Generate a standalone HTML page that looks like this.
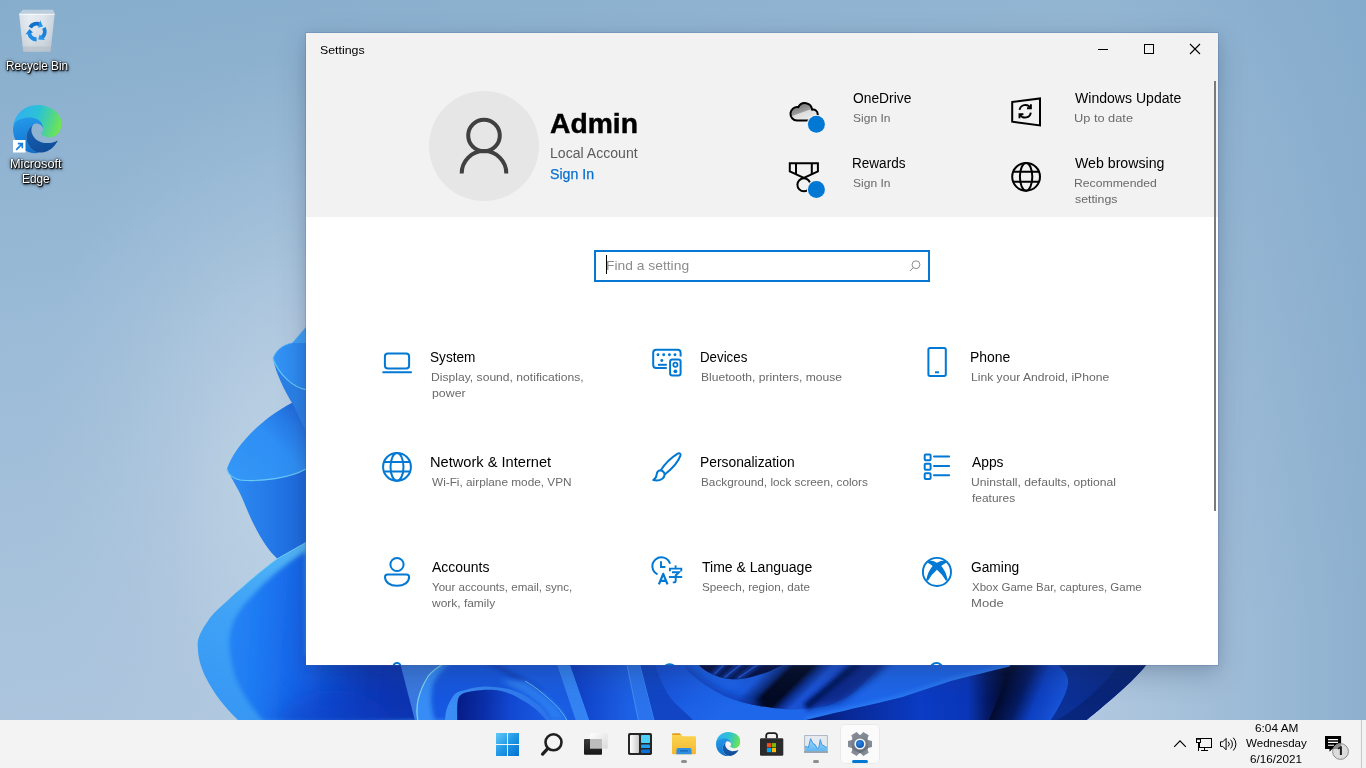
<!DOCTYPE html>
<html>
<head>
<meta charset="utf-8">
<title>Settings</title>
<style>
*{box-sizing:border-box;margin:0;padding:0}
html,body{width:1366px;height:768px;overflow:hidden}
body{font-family:"Liberation Sans",sans-serif;position:relative;background:#9bb9d4;color:#000}
svg{position:absolute;overflow:visible}
#wall{left:0;top:0;width:1366px;height:768px;overflow:hidden}
.t{position:absolute;white-space:nowrap;line-height:1;transform-origin:0 0;display:block}
.st{-webkit-text-stroke:.45px #000}
.s2{-webkit-text-stroke:.25px #0670d2}
.dl{text-shadow:1px 1px 1px rgba(0,0,0,.95),0 0 2px rgba(0,0,0,.95),0 1px 2px rgba(0,0,0,.8),0 0 4px rgba(0,0,0,.55),1px 2px 3px rgba(0,0,0,.5)}
#win{position:absolute;left:306px;top:33px;width:912px;height:632px;background:#fff;
 box-shadow:0 0 0 1px rgba(70,100,150,.22),0 10px 26px rgba(40,55,90,.26),0 2px 10px rgba(40,55,90,.10)}
#hdr{position:absolute;left:0;top:0;width:912px;height:184px;background:#f2f2f2}
#sb{position:absolute;left:1214px;top:81px;width:2px;height:430px;background:#7a7a7a}
#search{position:absolute;left:594px;top:250px;width:336px;height:32px;border:2px solid #0876d3;background:#fff}
#caret{position:absolute;left:606px;top:255px;width:1px;height:19px;background:#000}
#avatar{position:absolute;left:429px;top:91px;width:110px;height:110px;border-radius:50%;background:#e6e6e6}
#tb{position:absolute;left:0;top:720px;width:1366px;height:48px;background:#f3f3f3}
#tbhl{position:absolute;left:841px;top:725px;width:38px;height:38px;border-radius:4px;background:#fbfbfb;box-shadow:0 0 0 1px rgba(0,0,0,.04)}
.ind{position:absolute;height:3px;border-radius:2px;background:#8e8e8e}
</style>
</head>
<body>
<!--WALL-->
<svg id="wall" width="1366" height="768" viewBox="0 0 1366 768">
<defs>
<linearGradient id="bg" x1="0" y1="0" x2="0.30" y2="1">
<stop offset="0" stop-color="#86adcc"/><stop offset=".4" stop-color="#9bbbd7"/><stop offset=".75" stop-color="#a9c3dc"/><stop offset="1" stop-color="#b0c8df"/>
</linearGradient>
<radialGradient id="glowL" gradientUnits="userSpaceOnUse" cx="300" cy="470" r="330" gradientTransform="translate(300 470) scale(.8 1.25) translate(-300 -470)">
<stop offset="0" stop-color="#cbdbea" stop-opacity=".7"/><stop offset=".35" stop-color="#c4d6e7" stop-opacity=".5"/><stop offset=".7" stop-color="#b8cde1" stop-opacity=".22"/><stop offset="1" stop-color="#b0c8de" stop-opacity="0"/></radialGradient>
<linearGradient id="bgr" gradientUnits="userSpaceOnUse" x1="1100" y1="0" x2="1366" y2="0">
<stop offset="0" stop-color="#7ea6c8" stop-opacity="0"/><stop offset="1" stop-color="#7ea6c8" stop-opacity=".7"/>
</linearGradient>
<filter id="b2" x="-20%" y="-20%" width="140%" height="140%"><feGaussianBlur stdDeviation="2"/></filter>
<filter id="b3" x="-20%" y="-20%" width="140%" height="140%"><feGaussianBlur stdDeviation="3.500"/></filter>
<filter id="b6" x="-30%" y="-30%" width="160%" height="160%"><feGaussianBlur stdDeviation="6"/></filter>
<filter id="b12" x="-30%" y="-30%" width="160%" height="160%"><feGaussianBlur stdDeviation="12"/></filter>
<linearGradient id="gBin" gradientUnits="userSpaceOnUse" x1="238" y1="478" x2="310" y2="405">
<stop offset="0" stop-color="#3496f6"/><stop offset=".5" stop-color="#2e8ef4"/><stop offset=".75" stop-color="#2679e6"/><stop offset="1" stop-color="#1c5dd0"/></linearGradient>
<linearGradient id="gBout" gradientUnits="userSpaceOnUse" x1="227" y1="0" x2="306" y2="0">
<stop offset="0" stop-color="#2f8df2"/><stop offset="1" stop-color="#1c68de"/></linearGradient>
<linearGradient id="gAin" gradientUnits="userSpaceOnUse" x1="273" y1="0" x2="306" y2="0">
<stop offset="0" stop-color="#3496f5"/><stop offset="1" stop-color="#2a85ee"/></linearGradient>
<linearGradient id="gC" gradientUnits="userSpaceOnUse" x1="195" y1="640" x2="400" y2="655">
<stop offset="0" stop-color="#2a8cf6"/><stop offset=".28" stop-color="#1f7cf3"/><stop offset=".57" stop-color="#145ee6"/><stop offset=".74" stop-color="#0c44ca"/><stop offset=".86" stop-color="#0a38b8"/><stop offset="1" stop-color="#0a34b2"/></linearGradient>
<linearGradient id="gCrim" gradientUnits="userSpaceOnUse" x1="306" y1="540" x2="220" y2="720">
<stop offset="0" stop-color="#55b8f7"/><stop offset=".4" stop-color="#42a5f6"/><stop offset="1" stop-color="#3696f4"/></linearGradient>
<linearGradient id="gArch" gradientUnits="userSpaceOnUse" x1="457" y1="0" x2="546" y2="0">
<stop offset="0" stop-color="#071c86"/><stop offset=".3" stop-color="#0a2ea8"/><stop offset=".6" stop-color="#1248d2"/><stop offset="1" stop-color="#1a5ae2"/></linearGradient>
<linearGradient id="gArchB" gradientUnits="userSpaceOnUse" x1="445" y1="0" x2="551" y2="0">
<stop offset="0" stop-color="#3b8ff5"/><stop offset="1" stop-color="#2a72ea"/></linearGradient>
<linearGradient id="gMid1" gradientUnits="userSpaceOnUse" x1="575" y1="0" x2="632" y2="0">
<stop offset="0" stop-color="#0f40c6"/><stop offset="1" stop-color="#1d62e6"/></linearGradient>
<linearGradient id="gH1" gradientUnits="userSpaceOnUse" x1="660" y1="668" x2="720" y2="715">
<stop offset="0" stop-color="#164ed4"/><stop offset=".6" stop-color="#1c60e6"/><stop offset="1" stop-color="#1e66ea"/></linearGradient>
<linearGradient id="gH2" gradientUnits="userSpaceOnUse" x1="690" y1="0" x2="835" y2="0">
<stop offset="0" stop-color="#1c62e8"/><stop offset=".4" stop-color="#1856dc"/><stop offset=".62" stop-color="#08205e"/><stop offset=".75" stop-color="#030a22"/><stop offset=".9" stop-color="#0a2a7e"/><stop offset="1" stop-color="#1a55d8"/></linearGradient>
<linearGradient id="gP" gradientUnits="userSpaceOnUse" x1="740" y1="674.400" x2="810.700" y2="745.100">
<stop offset="0" stop-color="#1c62e8"/><stop offset=".15" stop-color="#1a5ae0"/><stop offset=".27" stop-color="#0b2a7a"/><stop offset=".32" stop-color="#030a24"/><stop offset=".45" stop-color="#030a24"/><stop offset=".52" stop-color="#0c2f8e"/><stop offset=".6" stop-color="#1a52d4"/><stop offset=".75" stop-color="#184ccc"/><stop offset="1" stop-color="#1446c0"/></linearGradient>
<linearGradient id="gJ" gradientUnits="userSpaceOnUse" x1="905" y1="693" x2="893" y2="646">
<stop offset="0" stop-color="#2d7cf2"/><stop offset=".25" stop-color="#1d64e6"/><stop offset=".6" stop-color="#1148c4"/><stop offset="1" stop-color="#061c6e"/></linearGradient>
<linearGradient id="gUJ" gradientUnits="userSpaceOnUse" x1="800" y1="0" x2="1040" y2="0">
<stop offset="0" stop-color="#05186a"/><stop offset=".2" stop-color="#082896"/><stop offset=".5" stop-color="#0b3cc4"/><stop offset=".7" stop-color="#0a36b8"/><stop offset=".78" stop-color="#051a66"/><stop offset=".86" stop-color="#020a2c"/><stop offset="1" stop-color="#030e40"/></linearGradient>
<linearGradient id="gK" gradientUnits="userSpaceOnUse" x1="1001" y1="690" x2="1062" y2="715.400">
<stop offset="0" stop-color="#020a2c"/><stop offset=".3" stop-color="#051a60"/><stop offset=".55" stop-color="#0d3fc0"/><stop offset="1" stop-color="#1a58dc"/></linearGradient>
<linearGradient id="gL" gradientUnits="userSpaceOnUse" x1="1060" y1="690" x2="1130" y2="650">
<stop offset="0" stop-color="#0b3096"/><stop offset=".6" stop-color="#0a2a88"/><stop offset="1" stop-color="#082474"/></linearGradient>
</defs>
<rect width="1366" height="768" fill="url(#bg)"/>
<rect width="1366" height="768" fill="url(#bgr)"/>
<rect width="700" height="768" fill="url(#glowL)"/>
<!-- window drop shadow (soft, on wallpaper) -->
<!-- bloom base -->
<path d="M306 330H1160V650L1146 665C1135 680 1105 705 1086.600 720H300V560L306 540Z" fill="#0e40c4"/>
<!-- ===== left strip ===== -->
<!-- B interior -->
<path d="M227 469C233 450 256 422 291.600 403L306 393V469C290 478 262 482 240 480C232 478 228 474 227 469Z" fill="url(#gBin)"/>
<!-- A0 sliver, A interior, A outer -->
<path d="M306 327L292.200 343H306Z" fill="#3e9ff5"/>
<path d="M273 358.700C279 375 293 387 306 389.600V432L293 404.500C284 390 276 373 273 358.700Z" fill="#2a80e8"/>
<path d="M273 358.700C275 351 283 344.500 292 343H306V389.600C293 387 279 375 273 358.700Z" fill="url(#gAin)"/>
<path d="M273 358.700C279 375 293 387 306 389.600" fill="none" stroke="#66c6f6" stroke-width="1.100"/>
<path d="M273 358.700C275 351 283 344.500 292 343" fill="none" stroke="#58b4f5" stroke-width=".800"/>
<!-- B outer -->
<path d="M227 469C228 474 232 478 240 480C262 482 290 478 306 469V542.400L277.300 558.700C265.900 548.700 254.400 528.600 243 500C238 488 231 478 227 469Z" fill="url(#gBout)"/>
<path d="M227 469C228 474 232 478 240 480C262 482 290 478 306 469" fill="none" stroke="#6acaf6" stroke-width="1.200"/>
<!-- C rim + inner -->
<path id="Cp" d="M306 542.400L277.300 558.700C262 570 248 582 237.300 591.600C222 606 212 614 208.600 620C200 632 197 640 197.700 646C198 658 201 668 205.800 677.500C213 692 225 708 238 720H420V655H306Z" fill="url(#gCrim)"/>
<clipPath id="Cc"><use href="#Cp"/></clipPath>
<g clip-path="url(#Cc)"><path d="M306 551C285 564 265 581 252.600 595.500C241 607 233 619 231 629.800C229 637 229 643 229.700 649.900C231 663 234 675 238.300 684.200C245 698 254 711 264 721H420V655H306Z" fill="url(#gC)" filter="url(#b2)"/><ellipse cx="335" cy="735" rx="60" ry="45" fill="#0b3cc0" opacity=".55" filter="url(#b12)"/></g>
<path d="M306 542.400L277.300 558.700C262 570 248 582 237.300 591.600" fill="none" stroke="#6fd0f6" stroke-width="1" opacity=".8"/>
<!-- ===== bottom strip ===== -->
<!-- D band (grayish light) -->
<path d="M399.300 660L414.800 720H420L446 720V660Z" fill="#3a7ae0"/>
<!-- D interior light band then inner -->
<path id="Dp" d="M446 660C440 666 434 669 428.300 676C417 694 415.500 708 417.800 720H570L560 660Z" fill="#378cf5"/>
<path d="M452 660C441 671 434.500 679 433.100 684C431 692 431 700 431.500 704C432 710 433 715 434.800 720H570L560 660Z" fill="#1858e0" filter="url(#b2)"/>
<path d="M446 662C440 666 434 669 428.300 676C417 694 415.500 708 417.800 720" fill="none" stroke="#7ad2f2" stroke-width="1.300"/>
<!-- E region above cyan edge -->
<path d="M489.500 660L525 681C531 684.500 536 688 541 692C547 697 552 701.500 557.200 706.700C561 711 564 715 566.800 720H580L560 660Z" fill="#1a5ce2"/>
<path d="M485 660L525 681L541 692" fill="none" stroke="#0a2c96" stroke-width="4" opacity=".55" filter="url(#b2)"/>
<!-- light band between arch and cyan edge -->
<path d="M500 680C514 688 520 691 525 694C531 698 536 702 541 706C545 710 548 715 550.700 720H566.800C564 715 561 711 557.200 706.700C552 701.500 547 697 541 692C536 688 531 684.500 525 681Z" fill="#2c7af0" filter="url(#b2)"/>
<path d="M525 681C531 684.500 536 688 541 692C547 697 552 701.500 557.200 706.700C561 711 564 715 566.800 720" fill="none" stroke="#63bdf2" stroke-width="1" opacity=".85"/>
<!-- arch band + dark interior -->
<path d="M445.200 720C445.500 712 446 708 452.500 697C456 692 460 691 463.700 690.600C470 688.500 478 687 484.700 686.600C493 686.600 501 687.500 508.800 689C514 690.500 520 693 525 695.400C531 699 536 702.500 541 706.700C545 710.500 548 715 550.700 720Z" fill="url(#gArchB)"/>
<path d="M457.300 720C457 712 457 704 458.100 698.700C460 694 464 692.500 470.200 691.400C478 690 486 689.600 492.700 689.800C501 690.500 510 693 516.900 697C523 700.500 529 704 534.600 708.300C539 712 543 716 545.900 720Z" fill="url(#gArch)"/>
<!-- F1 band -->
<path d="M555.500 660L575.700 720H589.400L568.500 660Z" fill="#3383f3"/>
<!-- mid region -->
<path d="M568.500 660L589.400 720H638.300L626 660Z" fill="url(#gMid1)"/>
<!-- F2 band -->
<path d="M626 660L638.300 720H654.400L639 660Z" fill="#2b73ec"/>
<path d="M626 660L638.300 720M639 660L654.400 720" stroke="#4d99f6" stroke-width="1" fill="none" opacity=".8"/>
<!-- G dark band -->
<path d="M639 660L654.400 720H693C684 711 678 706 673.700 702C668 695 665 690 662.500 684C658 675 656 668 653 660Z" fill="#1145c4"/>
<!-- layer1: H1 + J bright -->
<path d="M653 660C656 668 658 675 662.500 684C665 690 668 695 673.700 702C678 706 684 711 693 720H806L814 718C826 715 840 712 854.400 708.300C870 705 886 701 902.700 697C918 692 935 686 951 681C970 676 990 671 1010 666.400L1012 660Z" fill="url(#gH1)"/>
<path d="M806 721L814 719C826 716 840 713 854.400 709.300C870 706 886 702 902.700 698C918 693 935 687 951 682C970 677 990 672 1010 667.400" fill="none" stroke="#2f80f4" stroke-width="7" opacity=".8" filter="url(#b2)"/>
<!-- P surface (above curve2) -->
<path d="M681 660L683.400 665C686 669 688 671 690 673.200C700 682 712 690 724.800 696.200C736 701 748 704 759.500 705.900C769 707.600 778 708.800 787.400 709.400C801 709.600 815 708.500 829 705.500C838 702 846 698 854.400 692C864 684 872 675 880 665L883 660Z" fill="url(#gP)"/>
<clipPath id="Pc"><path d="M681 660L683.400 665C686 669 688 671 690 673.200C700 682 712 690 724.800 696.200C736 701 748 704 759.500 705.900C769 707.600 778 708.800 787.400 709.400L800 660Z"/></clipPath>
<g clip-path="url(#Pc)"><path d="M683.400 665C686 669 688 671 690 673.200C700 682 712 690 724.800 696.200C736 701 748 704 759.500 705.900" fill="none" stroke="#0d3ab2" stroke-width="9" opacity=".75" filter="url(#b3)"/></g>
<path d="M858 655L900 655L886 665C880 672 872 679 863 685C855 691 848 697 840 702L806 709L830 687Z" fill="#0a2a8c" filter="url(#b3)"/>
<path d="M860 662L830 687L806 707" fill="none" stroke="#05145a" stroke-width="7" filter="url(#b2)"/>
<!-- bowl -->
<clipPath id="Bw"><path d="M695 660L698.900 665.200C703 669.500 708 672.500 714.200 674.900C720 677.500 726 678.800 731.900 679.300C738 679.500 744 678.800 750.400 677.300C758 675.500 765 673 770.500 670.900C775 668.500 779 666.800 781.800 665.200L786 660Z"/></clipPath>
<g clip-path="url(#Bw)">
<rect x="690" y="655" width="100" height="30" fill="#060f42"/>
<g fill="none" stroke="#123fb6" stroke-width="5" filter="url(#b2)" opacity=".95">
<path d="M711.200 677.100L721.800 666.200L726 660"/><path d="M721.600 680.300L737.900 666.200L744 660"/><path d="M735.300 681.100L754.800 666.200L762 660"/>
</g>
<g fill="none" stroke="#2460dc" stroke-width="1.200" opacity=".9">
<path d="M714.200 674.100L723.800 665.200L728 660"/><path d="M724.600 677.300L739.900 665.200L746 660"/><path d="M738.300 678.100L756.800 665.200L763 660"/>
</g>
</g>
<!-- under J -->
<path d="M1010 666.400C990 671 970 676 951 681C935 686 918 692 902.700 697C886 701 870 705 854.400 708.300C840 712 826 715 814 718L806 720H1045V660H1012Z" fill="url(#gUJ)"/>
<!-- K -->
<path d="M1014 660H1050C1056 663 1062 668 1065.700 672.900C1068 677 1068.500 681 1068.100 684C1067 690 1065 695 1062.500 700C1059 707 1055 714 1051 720H989Z" fill="url(#gK)"/>
<!-- L -->
<path d="M1050 660C1056 663 1062 668 1065.700 672.900C1068 677 1068.500 681 1068.100 684C1067 690 1065 695 1062.500 700C1059 707 1055 714 1051 720H1086.600C1105 705 1135 680 1146 665L1150 660Z" fill="url(#gL)"/>
<path d="M1122 660C1112 676 1090 700 1057.600 720H1086.600C1105 705 1135 680 1146 665L1150 660Z" fill="#072270" opacity=".7"/>
</svg>
<!--/WALL-->
<!--DESK-->
<!-- recycle bin -->
<svg style="left:15px;top:6px" width="46" height="50" viewBox="15 6 46 50">
<defs>
<linearGradient id="rb1" x1="0" y1="0" x2="1" y2="0"><stop offset="0" stop-color="#d6dee6"/><stop offset=".3" stop-color="#ebeff3"/><stop offset=".7" stop-color="#dfe5eb"/><stop offset="1" stop-color="#c6cfd8"/></linearGradient>
<linearGradient id="rb2" x1="0" y1="0" x2="0" y2="1"><stop offset="0" stop-color="#ffffff" stop-opacity=".15"/><stop offset="1" stop-color="#9aa6b2" stop-opacity=".35"/></linearGradient>
</defs>
<path d="M22.600 9.800h30.500l1.600 3.900h-35.600z" fill="#cdd8e2" opacity=".75"/>
<path d="M19.100 13.700h35.600l-4.100 36.700a1.400 1.400 0 0 1-1.400 1.200h-24.600a1.400 1.400 0 0 1-1.400-1.200z" fill="url(#rb1)" opacity=".94"/>
<path d="M19.100 13.700h35.600l-4.100 36.700a1.400 1.400 0 0 1-1.400 1.200h-24.600a1.400 1.400 0 0 1-1.400-1.200z" fill="url(#rb2)"/>
<path d="M19.100 13.700h35.600l-.1 1.100h-35.400z" fill="#ffffff" opacity=".85"/>
<path d="M22.700 46.500h28.400l-.5 3.900a1.400 1.400 0 0 1-1.400 1.200h-24.600a1.400 1.400 0 0 1-1.400-1.200z" fill="#b4bec8" opacity=".6"/>
<g transform="translate(36.900 31.600)"><path d="M-6.70 -4.19A7.9 7.9 0 0 1 2.44 -7.51" fill="none" stroke="#1070cc" stroke-width="3.9"/><path d="M6.05 -5.08L1.10 -3.85L3.25 -11.34Z" fill="#2394ee"/><path d="M6.98 -3.71A7.9 7.9 0 0 1 5.29 5.87" fill="none" stroke="#1a80dc" stroke-width="3.9"/><path d="M1.37 7.78L2.78 2.88L8.20 8.49Z" fill="#2394ee"/><path d="M-0.28 7.90A7.9 7.9 0 0 1 -7.73 1.64" fill="none" stroke="#1e8ce8" stroke-width="3.9"/><path d="M-7.42 -2.70L-3.88 0.97L-11.45 2.85Z" fill="#1a84e0"/></g>
</svg>
<!-- edge desktop icon -->
<svg width="0" height="0" style="left:0;top:0"><defs>
<linearGradient id="eg1" gradientUnits="userSpaceOnUse" x1="3" y1="10" x2="47" y2="24"><stop offset="0" stop-color="#31b0f0"/><stop offset=".45" stop-color="#2cc2d6"/><stop offset=".75" stop-color="#4fd58e"/><stop offset="1" stop-color="#72e64c"/></linearGradient>
<linearGradient id="eg2" gradientUnits="userSpaceOnUse" x1="8" y1="13" x2="16" y2="48"><stop offset="0" stop-color="#2499e8"/><stop offset=".5" stop-color="#1a84dc"/><stop offset="1" stop-color="#1270cc"/></linearGradient>
<linearGradient id="eg3" gradientUnits="userSpaceOnUse" x1="20" y1="20" x2="34" y2="48"><stop offset="0" stop-color="#1661b2"/><stop offset="1" stop-color="#0f4c98"/></linearGradient>
<symbol id="edge" viewBox="0 0 48.400 48.400">
<path d="M0 24A24 24 0 0 1 24 0C37.500 0 48.400 8 48.400 17.800C48.400 22 47.500 25.500 45.500 28C43.500 30.500 41 32 37.700 32.300C35 32.600 32.500 32 30.700 31.100C29.500 30.400 28.500 29.600 28.100 28.750C29.300 27.500 30.100 26 30.100 24.100C30 21 28 17 24 15L4 20Z" fill="url(#eg1)"/>
<path d="M0 24C.500 21.500 1 19.500 1.800 17.800C4 15.500 6.500 14.200 9.600 13.500C12 12.800 14.500 12.400 17.400 12.500C20.500 12.800 23 13.500 25.200 14.800C27 16 28.300 17.500 29.100 19.400C29.700 20.800 30 22 30.100 23.300C29.600 22 28.800 20.800 27.800 20C26.200 18.800 24 18.300 22.500 18.500C21.500 18.700 20.600 19.300 19.800 20.200C17 22 15.500 24 15.100 25.600C13.800 28 13.300 30 13.400 31.900C13.300 34.500 13.800 36.500 14.500 38.100C15.500 40.500 17 42.600 19 44.400C21 46 23 47 25.200 47.500L24 48.400C17 48.400 11 45.500 6.500 41C2.500 36.500 0 30.500 0 24Z" fill="url(#eg2)"/>
<path d="M19.800 20.200C17 22 15.500 24 15.100 25.600C13.800 28 13.300 30 13.400 31.900C13.300 34.500 13.800 36.500 14.500 38.100C15.500 40.500 17 42.600 19 44.400C21 46 23 47 25.200 47.500C28.500 47.800 31.500 47.300 34.600 45.900C37 44.800 39 43.300 40.900 41.250C42.500 39.500 43.600 38 44.400 36.600C44.800 35.800 44.600 35.500 44 35.800C41.500 37.200 39.500 37.800 37 38C34.500 38.200 32 38.200 29.900 37.700C27.500 37 25.500 36.200 23.700 35C22 33.800 20.700 32.200 19.800 30.300C18.900 28.800 18.400 27.200 18.400 25.600C18.400 23.500 18.900 21.800 19.800 20.200Z" fill="url(#eg3)"/>
</symbol></defs></svg>
<svg style="left:13px;top:104.600px" width="48.400" height="48.400"><use href="#edge" width="48.400" height="48.400"/></svg>
<svg style="left:13px;top:140px" width="13" height="13" viewBox="0 0 13 13">
<rect width="12.500" height="12.500" fill="#fff"/>
<path d="M3.200 9.800l5.600-5.600M4.800 3.700h4.500v4.500" fill="none" stroke="#1a7fdc" stroke-width="1.700"/>
</svg>
<!--/DESK-->
<!--WIN-->
<div id="win"><div id="hdr"></div></div>
<div id="sb"></div>
<div id="avatar"></div>
<!-- avatar person -->
<svg style="left:429px;top:91px" width="110" height="110" viewBox="429 91 110 110" fill="none" stroke="#404040" stroke-width="4">
<circle cx="484" cy="135.5" r="15.8"/>
<path d="M461.7 173.4a22.3 22.3 0 0 1 44.6 0"/>
</svg>
<!-- window controls -->
<svg style="left:1090px;top:38px" width="120" height="24" viewBox="1090 38 120 24" fill="none" stroke="#000" stroke-width="1" shape-rendering="crispEdges">
<path d="M1098 49.5h10"/>
<rect x="1144.5" y="44.5" width="9" height="9"/>
</svg>
<svg style="left:1185px;top:38px" width="24" height="24" viewBox="1185 38 24 24" fill="none" stroke="#000" stroke-width="1.1">
<path d="M1190 44l10 10M1200 44l-10 10"/>
</svg>
<!-- search -->
<div id="search"></div><div id="caret"></div>
<svg style="left:905px;top:256px" width="20" height="20" viewBox="905 256 20 20" fill="none" stroke="#8f8f8f" stroke-width="1">
<circle cx="916" cy="264.7" r="3.9"/><path d="M913.3 267.6l-3.4 3.4"/>
</svg>
<!-- header icons -->
<!-- onedrive -->
<svg style="left:785px;top:95px" width="44" height="44" viewBox="785 95 44 44">
<defs><linearGradient id="odg" gradientUnits="userSpaceOnUse" x1="800" y1="103" x2="806.100" y2="119.900"><stop offset="0" stop-color="#747474"/><stop offset=".5" stop-color="#9c9c9c"/><stop offset=".56" stop-color="#dedede"/><stop offset="1" stop-color="#e9e9e9"/></linearGradient></defs>
<path d="M797.000 120.500A6.700 6.700 0 1 1 798.300 107.200A7.200 7.200 0 0 1 812.000 109.800A4.400 4.400 0 0 1 817.700 114.000L817.700 116.000C817.700 118.500 816.000 120.500 813.000 120.500Z" fill="url(#odg)" stroke="#000" stroke-width="2" stroke-linejoin="round"/>
<circle cx="816.400" cy="124.300" r="9.500" fill="#f2f2f2"/>
<circle cx="816.400" cy="124.300" r="8.500" fill="#0078d4"/>
</svg>
<!-- rewards -->
<svg style="left:785px;top:158px" width="44" height="44" viewBox="785 158 44 44" fill="none" stroke="#000" stroke-width="2">
<path d="M789.800 163.200h28.100v8.100l-14.050 6.700l-14.050-6.700z" stroke-linejoin="miter"/>
<path d="M796 163.200v10.800M811.800 163.200v10.800"/>
<circle cx="803.900" cy="184.800" r="6.500"/>
<circle cx="816.400" cy="189.400" r="9.600" fill="#f2f2f2" stroke="none"/>
<circle cx="816.400" cy="189.400" r="8.500" fill="#0078d4" stroke="none"/>
</svg>
<!-- windows update -->
<svg style="left:1005px;top:92px" width="44" height="44" viewBox="1005 92 44 44" fill="none" stroke="#000" stroke-width="2">
<path d="M1012.200 102.100l27.800-3.700v27.000l-27.800-3.700z" stroke-linejoin="miter"/>
<g stroke-width="1.900">
<path d="M1019.600 109.900a5.800 5.800 0 0 1 10.600-2.300"/>
<path d="M1030.900 104.300v3.900h-3.900"/>
<path d="M1030.800 112.600a5.800 5.800 0 0 1-10.600 2.300"/>
<path d="M1019.500 118.200v-3.900h3.900"/>
</g>
</svg>
<!-- web browsing globe -->
<svg style="left:1005px;top:158px" width="44" height="44" viewBox="1005 158 44 44" fill="none" stroke="#000" stroke-width="2">
<circle cx="1026.100" cy="176.800" r="13.900"/>
<ellipse cx="1026.100" cy="176.800" rx="6.200" ry="13.900"/>
<path d="M1013.200 171.800h25.800M1013.200 181.800h25.800"/>
</svg>
<!-- TILE ICONS -->
<g></g>
<!-- system -->
<svg style="left:378px;top:344px" width="40" height="40" viewBox="378 344 40 40" fill="none" stroke="#0078d4" stroke-width="2">
<rect x="384.900" y="353.400" width="24.200" height="15.200" rx="3.000"/>
<path d="M383.200 372.300h27.800" stroke-linecap="round"/>
</svg>
<!-- devices -->
<svg style="left:648px;top:344px" width="40" height="40" viewBox="648 344 40 40" fill="none" stroke="#0078d4" stroke-width="2">
<path d="M666.800 368.100h-10.600a3.000 3.000 0 0 1-3.000-3.000v-12.300a3.000 3.000 0 0 1 3.000-3.000h21.400a3.000 3.000 0 0 1 3.000 3.000v3.800"/>
<rect x="670.100" y="359.400" width="10.500" height="16.200" rx="2.300"/>
<circle cx="675.400" cy="364.800" r="2.100" stroke-width="1.800"/>
<circle cx="675.400" cy="371.300" r="1.900" fill="#0078d4" stroke="none"/>
<g fill="#0078d4" stroke="none"><circle cx="658.000" cy="354.800" r="1.450"/><circle cx="663.700" cy="354.800" r="1.450"/><circle cx="669.400" cy="354.800" r="1.450"/><circle cx="675.000" cy="354.800" r="1.450"/><circle cx="661.800" cy="360.500" r="1.450"/></g>
<path d="M657.900 364.800h8.900" stroke-width="2"/>
</svg>
<!-- phone -->
<svg style="left:918px;top:344px" width="40" height="40" viewBox="918 344 40 40" fill="none" stroke="#0078d4" stroke-width="2">
<rect x="928.400" y="347.900" width="17.400" height="28.000" rx="1.700"/>
<path d="M935.000 372.300h4.000" stroke-width="2"/>
</svg>
<!-- network globe -->
<svg style="left:378px;top:449px" width="40" height="40" viewBox="378 449 40 40" fill="none" stroke="#0078d4" stroke-width="2">
<circle cx="397.000" cy="466.900" r="13.900"/>
<ellipse cx="397.000" cy="466.900" rx="6.500" ry="13.900"/>
<path d="M384.000 462.100h26.000M384.000 471.600h26.000"/>
</svg>
<!-- personalization brush -->
<svg style="left:648px;top:449px" width="40" height="40" viewBox="648 449 40 40" fill="none" stroke="#0078d4" stroke-width="2" stroke-linejoin="round" stroke-linecap="round">
<path d="M660.800 470.200C664.200 465.000 670.200 458.300 677.300 453.900C679.300 452.700 680.900 453.400 680.500 455.400C678.600 461.200 672.200 468.600 665.000 474.200"/>
<path d="M660.800 470.200C658.300 470.400 656.800 472.200 656.600 474.800C656.500 477.200 655.800 478.600 653.200 480.100C656.600 480.800 660.000 480.400 662.300 478.700C664.500 476.900 665.000 474.600 664.000 472.600C663.200 471.300 662.100 470.500 660.800 470.200Z"/>
</svg>
<!-- apps -->
<svg style="left:918px;top:449px" width="40" height="40" viewBox="918 449 40 40" fill="none" stroke="#0078d4" stroke-width="2">
<rect x="924.700" y="454.400" width="5.900" height="5.900" rx="1"/><rect x="924.700" y="463.800" width="5.900" height="5.900" rx="1"/><rect x="924.700" y="473.200" width="5.900" height="5.900" rx="1"/>
<path d="M934.000 456.600h15.100M934.000 466.000h15.100M934.000 475.300h15.100" stroke-linecap="round"/>
</svg>
<!-- accounts -->
<svg style="left:378px;top:554px" width="40" height="40" viewBox="378 554 40 40" fill="none" stroke="#0078d4" stroke-width="2">
<circle cx="397.000" cy="564.500" r="6.600"/>
<path d="M387.500 574.400H406.600a2.500 2.500 0 0 1 2.500 2.500c0 5.500-5 8.900-12.050 8.900s-12.050-3.400-12.050-8.900a2.500 2.500 0 0 1 2.500-2.500z"/>
</svg>
<!-- time & language -->
<svg style="left:648px;top:554px" width="40" height="40" viewBox="648 554 40 40" fill="none" stroke="#0078d4" stroke-width="2">
<path d="M657.500 574.400a9.000 9.000 0 1 1 12.500-10.700"/>
<path d="M661.000 561.300v5.700h4.400" stroke-width="1.900"/>
<path d="M658.900 584.400l4.300-10.600l4.300 10.600M660.400 580.900h5.600" stroke-width="2.200" stroke-linejoin="round"/>
<g stroke-width="1.900"><path d="M675.600 565.400v2.500"/><path d="M669.900 571.200v-2.600h11.400v2.600"/><path d="M672.000 572.200h7.000l-3.300 3.300v5.300a1.600 1.600 0 0 1-1.600 1.600h-1.300"/><path d="M668.900 577.000h13.300"/></g>
</svg>
<!-- gaming xbox -->
<svg style="left:918px;top:554px" width="40" height="40" viewBox="918 554 40 40">
<circle cx="936.950" cy="571.900" r="14.050" fill="none" stroke="#0078d4" stroke-width="1.900"/>
<path transform="translate(936.950 571.900)" d="M-8-11.300Q-3.500-11.300 0-9.200Q3.500-11.300 8-11.300L9.300-9.200Q6.500-7.800 4.300-5.800Q8.500-1.500 10.800 8L9 8.750Q6 3 0-2.200Q-6 3-9 8.750L-10.800 8Q-8.500-1.500-4.300-5.800Q-6.500-7.800-9.300-9.200Z" fill="#0078d4"/>
</svg>
<!-- peek of next row -->
<svg style="left:380px;top:660px;overflow:hidden" width="600" height="5" viewBox="380 660 600 5" fill="none" stroke="#0078d4" stroke-width="2">
<circle cx="397.000" cy="666.500" r="3.500"/>
<circle cx="669.700" cy="671.200" r="7.000"/>
<circle cx="936.500" cy="669.500" r="6.500"/>
</svg>
<!--/WIN-->
<!--TB-->
<div id="tb"></div>
<div id="tbhl"></div>
<div class="ind" style="left:681px;top:760px;width:6px;height:2.500px"></div>
<div class="ind" style="left:813px;top:760px;width:6px;height:2.500px"></div>
<div class="ind" style="left:852px;top:760px;width:16px;height:3px;background:#0078d4"></div>
<!-- start -->
<svg style="left:496px;top:733px" width="23" height="23" viewBox="0 0 23 23">
<defs><linearGradient id="wg" x1="0" y1="0" x2="1" y2="1"><stop offset="0" stop-color="#62c8f8"/><stop offset=".5" stop-color="#1f98e6"/><stop offset="1" stop-color="#0670cf"/></linearGradient></defs>
<path d="M0 0h11v11H0zM12 0h11v11H12zM0 12h11v11H0zM12 12h11v11H12z" fill="url(#wg)"/>
</svg>
<!-- search -->
<svg style="left:540px;top:732px" width="24" height="24" viewBox="540 732 24 24" fill="none" stroke="#1f1f1f" stroke-linecap="round">
<circle cx="553.500" cy="742.300" r="8.000" stroke-width="2.600"/>
<path d="M547.000 749.400l-4.400 4.700" stroke-width="3.300"/>
</svg>
<!-- task view -->
<svg style="left:583px;top:732px" width="26" height="24" viewBox="583 732 26 24">
<defs><linearGradient id="tv1" x1="0" y1="0" x2="1" y2="1"><stop offset="0" stop-color="#ffffff"/><stop offset="1" stop-color="#d9d9d9"/></linearGradient>
<linearGradient id="tv2" x1="0" y1="0" x2="0" y2="1"><stop offset="0" stop-color="#3a3a3a"/><stop offset="1" stop-color="#161616"/></linearGradient></defs>
<rect x="590.000" y="733.000" width="17.700" height="15.700" rx="1" fill="url(#tv1)"/>
<rect x="584.000" y="739.000" width="18.000" height="15.800" rx="1" fill="url(#tv2)"/>
<rect x="590.000" y="739.000" width="12.000" height="9.700" fill="#bdbdbd"/>
</svg>
<!-- widgets -->
<svg style="left:628px;top:732px" width="24" height="24" viewBox="628 732 24 24">
<defs><linearGradient id="wd1" x1="0" y1="0" x2="1" y2="0"><stop offset="0" stop-color="#ffffff"/><stop offset="1" stop-color="#c9c9c9"/></linearGradient></defs>
<rect x="628.000" y="733.000" width="24.000" height="22.000" rx="1.800" fill="#262626"/>
<rect x="630.000" y="735.000" width="9.000" height="18.000" rx=".8" fill="url(#wd1)"/>
<rect x="641.000" y="735.000" width="9.000" height="8.000" rx=".8" fill="#4fd0f6"/>
<rect x="641.000" y="744.600" width="9.000" height="3.400" rx=".8" fill="#21a0ef"/>
<rect x="641.000" y="749.400" width="9.000" height="3.600" rx=".8" fill="#0b6fd8"/>
</svg>
<!-- explorer -->
<svg style="left:671px;top:732px" width="26" height="24" viewBox="671 732 26 24">
<defs><linearGradient id="fg" x1="0" y1="0" x2="0" y2="1"><stop offset="0" stop-color="#fbd44f"/><stop offset="1" stop-color="#f4b731"/></linearGradient></defs>
<path d="M672.000 734.500a1.200 1.200 0 0 1 1.200-1.200h6.500l2.300 2.200h-10.000z" fill="#e39e22"/>
<path d="M672.000 735.000h9.000l2.000 1.200h11.800a1.200 1.200 0 0 1 1.200 1.200v15.600a1.200 1.200 0 0 1-1.200 1.200h-21.600a1.200 1.200 0 0 1-1.200-1.200z" fill="url(#fg)"/>
<path d="M676.400 754.200v-4.300a2.000 2.000 0 0 1 2.000-2.000h11.200a2.000 2.000 0 0 1 2.000 2.000v4.300z" fill="#2f8fde"/>
<rect x="680.000" y="750.300" width="8.000" height="1.300" rx=".6" fill="#1464b4"/>
</svg>
<!-- edge -->
<svg style="left:715.700px;top:732px" width="24.300" height="24.300"><use href="#edge" width="24.300" height="24.300"/></svg>
<!-- store -->
<svg style="left:759px;top:731px" width="26" height="26" viewBox="759 731 26 26">
<path d="M766.200 738.500v-3.000a2.300 2.300 0 0 1 2.300-2.300h6.200a2.300 2.300 0 0 1 2.300 2.300v3.000" fill="none" stroke="#1e1e1e" stroke-width="1.800"/>
<rect x="760.000" y="738.200" width="23.300" height="17.600" rx="1.200" fill="#2b2b2b"/>
<rect x="766.900" y="743.100" width="4.200" height="4.200" fill="#f25022"/><rect x="771.800" y="743.100" width="4.200" height="4.200" fill="#7fba00"/>
<rect x="766.900" y="748.000" width="4.200" height="4.200" fill="#00a4ef"/><rect x="771.800" y="748.000" width="4.200" height="4.200" fill="#ffb900"/>
</svg>
<!-- perf monitor -->
<svg style="left:803px;top:733px" width="26" height="22" viewBox="803 733 26 22">
<defs><linearGradient id="pm1" x1="0" y1="0" x2="0" y2="1"><stop offset="0" stop-color="#9fd8fb"/><stop offset="1" stop-color="#5fb6f1"/></linearGradient></defs>
<rect x="804.100" y="734.900" width="23.800" height="17.900" rx=".8" fill="#a9b5c3"/>
<rect x="805.100" y="735.900" width="21.800" height="15.400" fill="#e6eaee"/>
<path d="M805.100 751.300V747.100L806.500 746.200L808.300 748.000L810.600 738.600L813.000 743.600L815.300 744.700L817.100 748.500L818.800 747.700L820.300 739.500L821.800 744.700L824.100 745.900L826.900 747.600V751.300Z" fill="url(#pm1)"/>
<path d="M805.100 747.100L806.500 746.200L808.300 748.000L810.600 738.600L813.000 743.600L815.300 744.700L817.100 748.500L818.800 747.700L820.300 739.500L821.800 744.700L824.100 745.900L826.900 747.600" fill="none" stroke="#3a98e8" stroke-width="1" stroke-linejoin="round"/>
<rect x="804.100" y="751.300" width="23.800" height="1.500" fill="#8f9aa8"/>
</svg>
<!-- settings gear -->
<svg style="left:847px;top:731px" width="26" height="26" viewBox="-13 -13 26 26">
<defs><linearGradient id="gg" gradientUnits="userSpaceOnUse" x1="-10" y1="-8" x2="4" y2="12"><stop offset="0" stop-color="#8a919b"/><stop offset="1" stop-color="#5f6670"/></linearGradient>
<radialGradient id="gb" cx=".4" cy=".35" r=".8"><stop offset="0" stop-color="#2a86e0"/><stop offset="1" stop-color="#0b4fae"/></radialGradient></defs>
<g fill="url(#gg)" transform="rotate(30)">
<circle r="9.200"/>
<g id="tooth"><path d="M-3.100-12.000h6.200l.9 4.000h-8.000z"/></g>
<use href="#tooth" transform="rotate(60)"/><use href="#tooth" transform="rotate(120)"/><use href="#tooth" transform="rotate(180)"/><use href="#tooth" transform="rotate(240)"/><use href="#tooth" transform="rotate(300)"/>
</g>
<circle r="5.600" fill="#f4f6f8"/>
<circle r="4.000" fill="url(#gb)"/>
</svg>
<!-- tray -->
<svg style="left:1170px;top:734px" width="70" height="20" viewBox="1170 734 70 20" fill="none" stroke="#000" stroke-width="1.200">
<path d="M1174.200 746.900l5.800-6.000l5.800 6.000" stroke-width="1.150"/>
<g stroke-width="1" shape-rendering="crispEdges">
<rect x="1199.500" y="738.500" width="12" height="9"/>
<path d="M1204.500 747.500v3M1201 750.500h7"/>
<rect x="1196.500" y="738.500" width="4" height="4" fill="#f3f3f3"/>
<path d="M1197 739.500h3" stroke="#444"/>
<path d="M1198.500 742.500v8"/>
</g>
<path d="M1220.500 741.800h2.300l3.300-3.400v11.400l-3.300-3.400h-2.300z" stroke-width="1" stroke-linejoin="miter"/>
<path d="M1228.200 741.700a3.400 3.400 0 0 1 0 4.800M1230.600 739.700a6.300 6.300 0 0 1 0 8.800M1233.300 737.700a9.200 9.200 0 0 1 0 12.800" stroke-width="1"/>
</svg>
<!-- notification -->
<svg style="left:1322px;top:734px" width="30" height="28" viewBox="1322 734 30 28">
<path d="M1325.000 736.100h16.100v12.800h-8.900l-2.700 2.800v-2.800h-4.500z" fill="#000"/>
<path d="M1328.000 739.600h10.000M1328.000 742.400h10.000M1328.000 745.300h6.000" stroke="#fff" stroke-width="1.100"/>
<circle cx="1340.500" cy="751.500" r="7.900" fill="#d0d0d0" fill-opacity=".66" stroke="#8c8c8c" stroke-width="1"/>
<path d="M1338.000 748.000l2.600-1.700h1.300v8.700h-2.000v-6.500l-1.900 1.100z" fill="#1c1c1c"/>
</svg>
<div style="position:absolute;left:1361px;top:720px;width:1px;height:48px;background:#c8c8c8"></div>
<!--/TB-->
<span class="t" style="left:319.7px;top:45px;font-size:11.5px;color:#000;transform:scaleX(1.075)">Settings</span>
<span class="t st" style="left:550.4px;top:110px;font-size:28px;color:#000;font-weight:700;transform:scaleX(1.010)">Admin</span>
<span class="t" style="left:549.9px;top:146px;font-size:14px;color:#5c5c5c;transform:scaleX(1.006)">Local Account</span>
<span class="t s2" style="left:550.1px;top:167px;font-size:14px;color:#0670d2;transform:scaleX(1.010)">Sign In</span>
<span class="t" style="left:852.6px;top:91px;font-size:14px;color:#000;transform:scaleX(0.986)">OneDrive</span>
<span class="t" style="left:852.6px;top:113px;font-size:11.5px;color:#6a6a6a;transform:scaleX(1.046)">Sign In</span>
<span class="t" style="left:1074.8px;top:91px;font-size:14px;color:#000;transform:scaleX(1.004)">Windows Update</span>
<span class="t" style="left:1073.6px;top:113px;font-size:11.5px;color:#6a6a6a;transform:scaleX(1.112)">Up to date</span>
<span class="t" style="left:851.6px;top:156px;font-size:14px;color:#000;transform:scaleX(0.968)">Rewards</span>
<span class="t" style="left:852.6px;top:178px;font-size:11.5px;color:#6a6a6a;transform:scaleX(1.046)">Sign In</span>
<span class="t" style="left:1074.8px;top:156px;font-size:14px;color:#000;transform:scaleX(1.011)">Web browsing</span>
<span class="t" style="left:1073.7px;top:178px;font-size:11.5px;color:#6a6a6a;transform:scaleX(1.062)">Recommended</span>
<span class="t" style="left:1074.8px;top:194px;font-size:11.5px;color:#6a6a6a;transform:scaleX(1.072)">settings</span>
<span class="t" style="left:606.0px;top:259px;font-size:13.5px;color:#8c8c8c;transform:scaleX(1.025)">Find a setting</span>
<span class="t" style="left:430.4px;top:350px;font-size:14px;color:#000;transform:scaleX(0.973)">System</span>
<span class="t" style="left:431.0px;top:372px;font-size:11.5px;color:#6a6a6a;transform:scaleX(1.054)">Display, sound, notifications,</span>
<span class="t" style="left:432.1px;top:388px;font-size:11.5px;color:#6a6a6a;transform:scaleX(1.073)">power</span>
<span class="t" style="left:700.1px;top:350px;font-size:14px;color:#000;transform:scaleX(0.950)">Devices</span>
<span class="t" style="left:701.0px;top:372px;font-size:11.5px;color:#6a6a6a;transform:scaleX(1.051)">Bluetooth, printers, mouse</span>
<span class="t" style="left:970.0px;top:350px;font-size:14px;color:#000;transform:scaleX(0.997)">Phone</span>
<span class="t" style="left:971.0px;top:372px;font-size:11.5px;color:#6a6a6a;transform:scaleX(1.054)">Link your Android, iPhone</span>
<span class="t" style="left:429.9px;top:455px;font-size:14px;color:#000;transform:scaleX(1.045)">Network &amp; Internet</span>
<span class="t" style="left:431.7px;top:477px;font-size:11.5px;color:#6a6a6a;transform:scaleX(1.025)">Wi-Fi, airplane mode, VPN</span>
<span class="t" style="left:700.0px;top:455px;font-size:14px;color:#000;transform:scaleX(0.988)">Personalization</span>
<span class="t" style="left:701.1px;top:477px;font-size:11.5px;color:#6a6a6a;transform:scaleX(1.024)">Background, lock screen, colors</span>
<span class="t" style="left:971.7px;top:455px;font-size:14px;color:#000;transform:scaleX(0.987)">Apps</span>
<span class="t" style="left:971.0px;top:477px;font-size:11.5px;color:#6a6a6a;transform:scaleX(1.055)">Uninstall, defaults, optional</span>
<span class="t" style="left:972.1px;top:493px;font-size:11.5px;color:#6a6a6a;transform:scaleX(1.038)">features</span>
<span class="t" style="left:431.7px;top:560px;font-size:14px;color:#000;transform:scaleX(0.996)">Accounts</span>
<span class="t" style="left:432.1px;top:582px;font-size:11.5px;color:#6a6a6a;transform:scaleX(1.005)">Your accounts, email, sync,</span>
<span class="t" style="left:432.1px;top:598px;font-size:11.5px;color:#6a6a6a;transform:scaleX(1.040)">work, family</span>
<span class="t" style="left:701.7px;top:560px;font-size:14px;color:#000;transform:scaleX(1.002)">Time &amp; Language</span>
<span class="t" style="left:702.1px;top:582px;font-size:11.5px;color:#6a6a6a;transform:scaleX(1.018)">Speech, region, date</span>
<span class="t" style="left:971.4px;top:560px;font-size:14px;color:#000;transform:scaleX(0.983)">Gaming</span>
<span class="t" style="left:971.7px;top:582px;font-size:11.5px;color:#6a6a6a;transform:scaleX(1.002)">Xbox Game Bar, captures, Game</span>
<span class="t" style="left:970.9px;top:598px;font-size:11.5px;color:#6a6a6a;transform:scaleX(1.137)">Mode</span>
<span class="t" style="left:1254.8px;top:723px;font-size:11.5px;color:#000;transform:scaleX(1.029)">6:04 AM</span>
<span class="t" style="left:1245.8px;top:738px;font-size:11.5px;color:#000;transform:scaleX(1.005)">Wednesday</span>
<span class="t" style="left:1249.7px;top:754px;font-size:11.5px;color:#000;transform:scaleX(1.016)">6/16/2021</span>
<span class="t dl" style="left:6.1px;top:60px;font-size:12px;color:#fff;transform:scaleX(0.980)">Recycle Bin</span>
<span class="t dl" style="left:10.1px;top:158px;font-size:12px;color:#fff;transform:scaleX(1.060)">Microsoft</span>
<span class="t dl" style="left:21.9px;top:173px;font-size:12px;color:#fff;transform:scaleX(0.985)">Edge</span>
</body>
</html>
